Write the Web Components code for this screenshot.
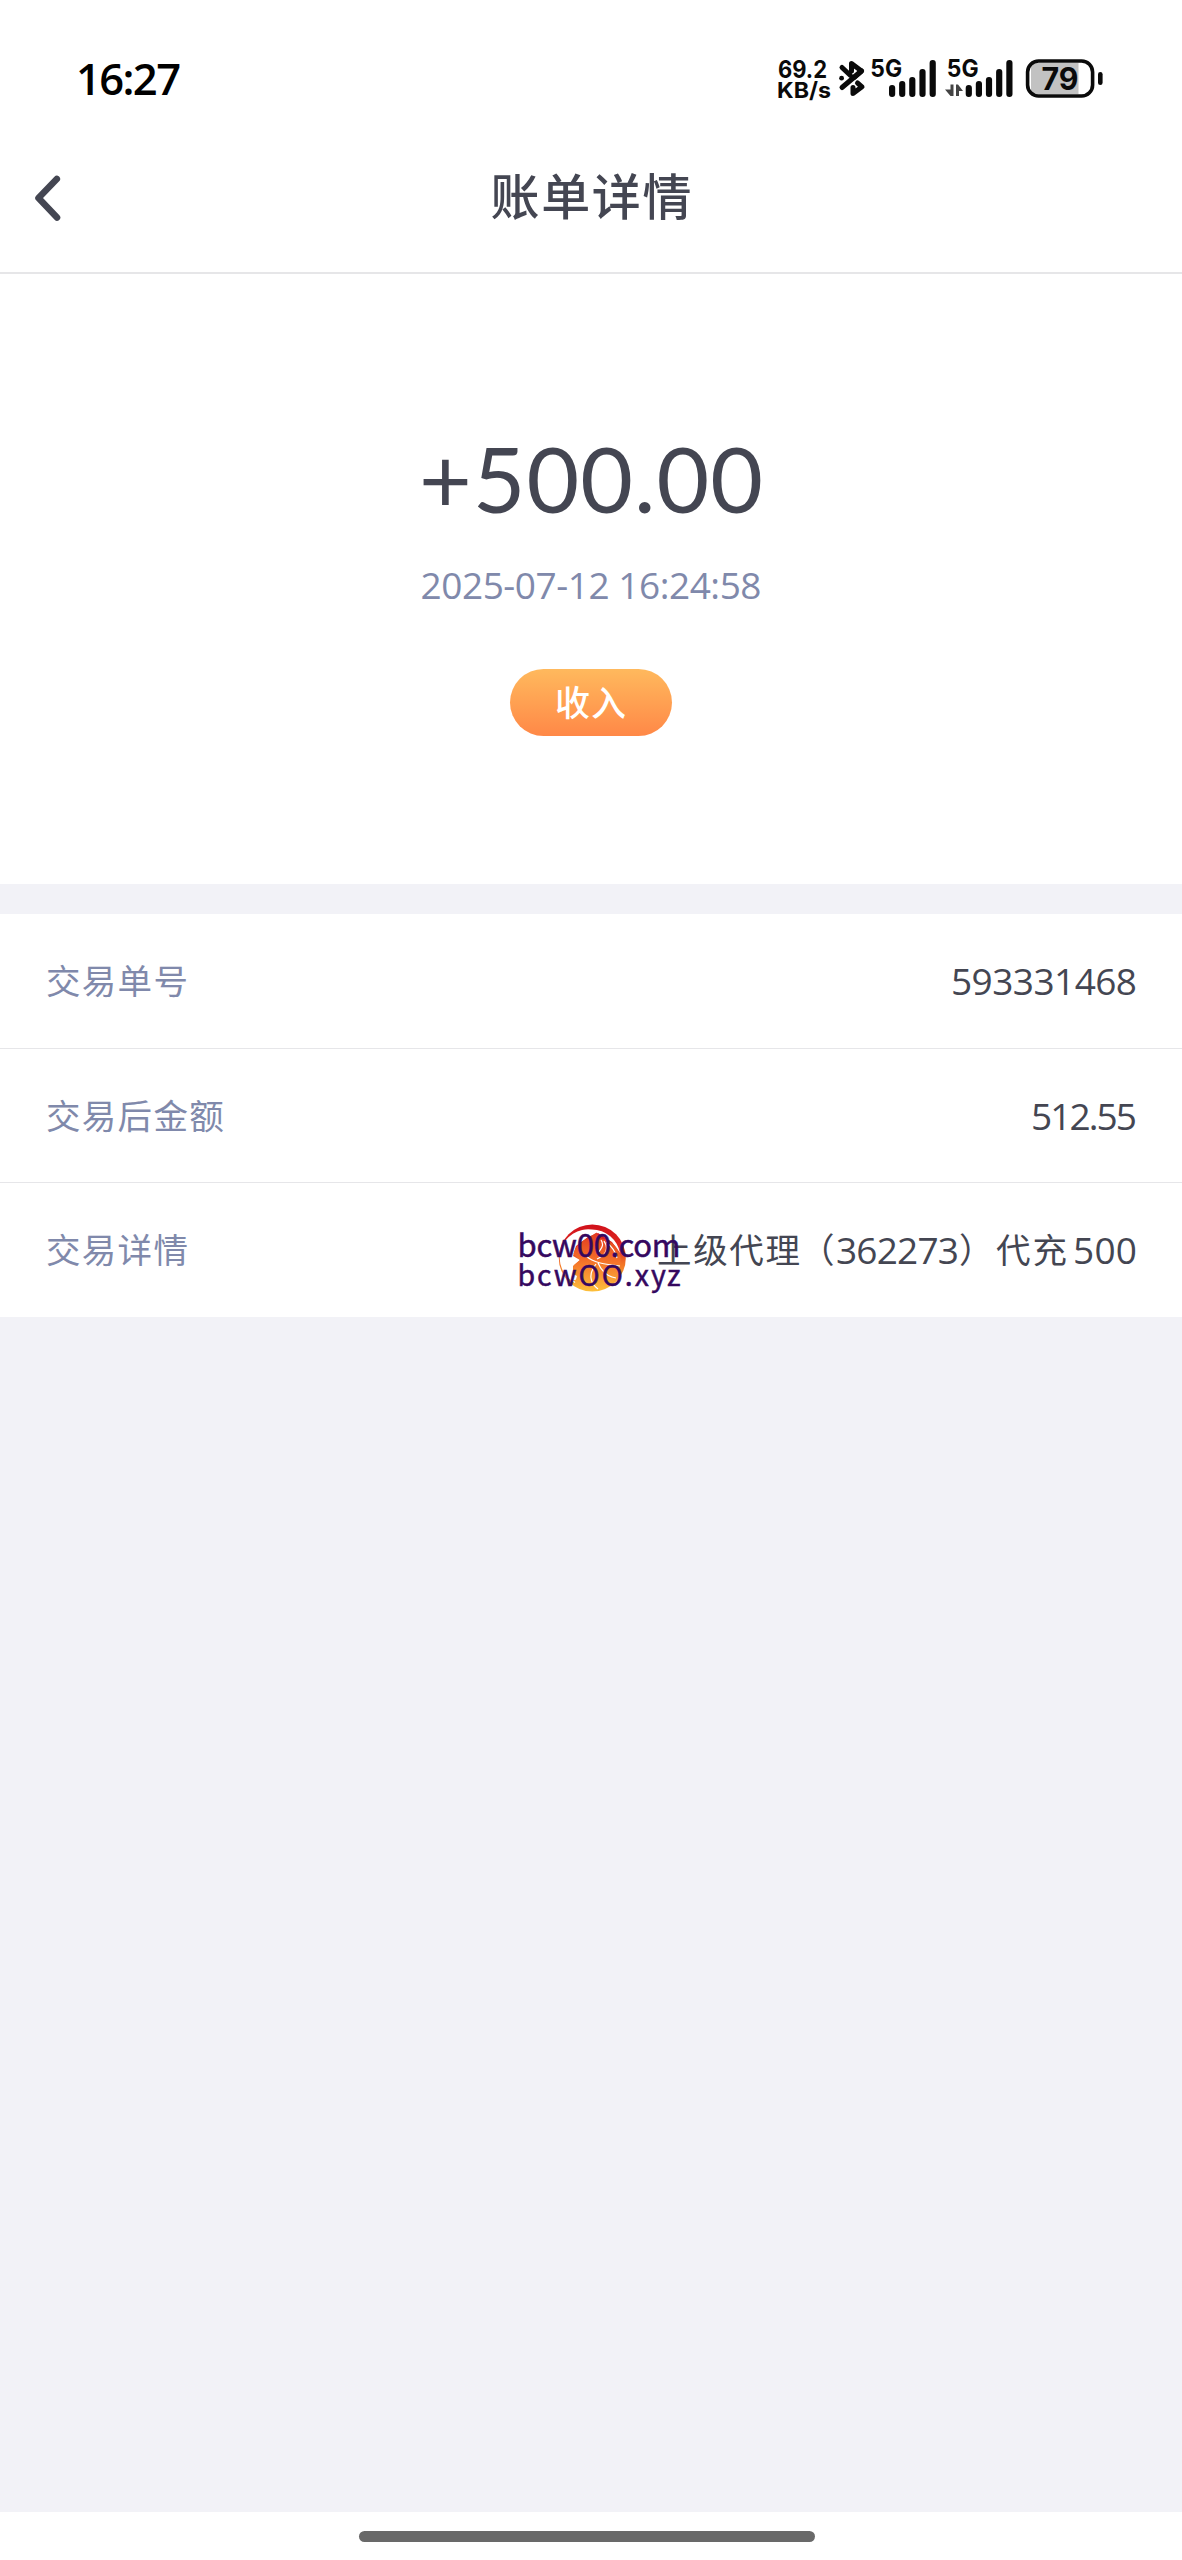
<!DOCTYPE html>
<html lang="zh-CN">
<head>
<meta charset="utf-8">
<title>账单详情</title>
<style>
html,body{margin:0;padding:0;background:#f2f2f7}
body{width:1182px;height:2560px;overflow:hidden;font-family:"Open Sans","Noto Sans CJK SC",sans-serif;color:#444652}
</style>
</head>
<body>
<bill-page></bill-page>
<script>
function define(name, html, setup) {
  const t = document.createElement('template');
  t.innerHTML = html;
  customElements.define(name, class extends HTMLElement {
    constructor() {
      super();
      this.attachShadow({mode: 'open'}).appendChild(t.content.cloneNode(true));
    }
    connectedCallback() { if (setup) setup.call(this, this.shadowRoot); }
  });
}

/* Text tracked so that its advance equals the "w" attribute. */
define('tracked-text', `<style>:host{display:inline-block;white-space:nowrap}span{display:inline-block}</style><span><slot></slot></span>`, function (r) {
  const s = r.querySelector('span');
  const n = [...this.textContent].length;
  if (n < 2) { this.style.width = this.getAttribute('w') + 'px'; return; }
  const ls = (parseFloat(this.getAttribute('w')) - s.getBoundingClientRect().width) / (n - 1);
  s.style.letterSpacing = ls + 'px';
  s.style.marginRight = -ls + 'px';
});

define('status-icons', `<style>:host{display:block;width:350px;height:50px}svg{display:block}text{font-family:Inter,sans-serif;font-weight:700}</style>
<svg width="350" height="50" viewBox="770 54 350 50" fill="#0a0a0a">
<text x="778" y="77.5" font-size="24" textLength="49" lengthAdjust="spacingAndGlyphs">69.2</text>
<text x="777" y="97.7" font-size="22" textLength="54" lengthAdjust="spacingAndGlyphs">KB/s</text>
<g fill="none" stroke="#0a0a0a" stroke-width="5" stroke-linejoin="round" stroke-linecap="round">
<path d="M842 67.5 L850.5 75.5 M851.5 71 V63.5 L861.5 71 L842 87.5"/>
<path d="M861.5 71 L854 77.5"/>
<path d="M853 87.5 V93.5 L862 86.8 L857.5 83"/>
</g>
<circle cx="841.6" cy="78.2" r="2.4"/>
<text x="870.3" y="77.2" font-size="24.500" textLength="31.800" lengthAdjust="spacingAndGlyphs">5G</text>
<g id="b"><rect x="889" y="85" width="6.2" height="12" rx="3"/><rect x="899.1" y="81" width="6.2" height="16" rx="3"/><rect x="909.2" y="77" width="6.2" height="20" rx="3"/><rect x="919.4" y="69" width="6.2" height="28" rx="3"/><rect x="929.6" y="60" width="6.2" height="37" rx="3"/></g>
<text x="946.8" y="77.2" font-size="24.500" textLength="31.800" lengthAdjust="spacingAndGlyphs">5G</text>
<path fill="#444" d="M950.5 84.5h3v11.500h-3l-5.500-6.500h5.500zM956 84.500h2l5 6.500h-4v5h-3z"/>
<use href="#b" x="76.700"/>
<rect x="1031" y="63" width="47.500" height="31" fill="#c2c2c2"/>
<rect x="1027.600" y="61" width="65" height="35" rx="11" fill="none" stroke="#0a0a0a" stroke-width="3.600"/>
<rect x="1098" y="72" width="4.600" height="13" rx="2.300"/>
<text x="1041.500" y="90.300" font-size="31" textLength="37" lengthAdjust="spacingAndGlyphs">79</text>
</svg>`);

define('status-bar', `<style>:host{display:flex;justify-content:space-between;align-items:center;height:158px;box-sizing:border-box;padding:0 62px 0 76px;color:#000}
tracked-text{font-size:43.500px;font-weight:600;line-height:50px}</style>
<tracked-text w="105">16:27</tracked-text><status-icons></status-icons>`);

define('nav-bar', `<style>:host{display:flex;align-items:center;height:116px;box-sizing:border-box;padding:0 30px 37px;border-bottom:2px solid #e6e6e8;color:#444652}
svg,i{flex:none;width:40px;height:50px}h1{flex:1;margin:0 0 5px;text-align:center;font:500 49px/60px "Noto Sans CJK SC",sans-serif;letter-spacing:1.700px;text-indent:1.700px}</style>
<svg viewBox="31 171 40 50" fill="none" stroke="#444652" stroke-width="6.600" stroke-linecap="round" stroke-linejoin="round"><path d="M57.800 178 L39.500 197 L58 216.500"/></svg>
<h1><slot></slot></h1><i></i>`);

define('type-pill', `<style>:host{display:flex;align-items:center;justify-content:center;width:162px;height:67px;border-radius:34px;background:linear-gradient(#ffb95d,#ff8847);color:#fff;font:500 35px/50px "Noto Sans CJK SC",sans-serif;letter-spacing:1px}
span{margin-top:-3px}</style><span><slot></slot></span>`);

define('amount-card', `<style>:host{display:flex;flex-direction:column;align-items:center;height:610px;box-sizing:border-box;padding-top:149px}
.a{font-family:Lato,sans-serif;font-size:91px;line-height:110px;font-weight:400;color:#444652}.d{font-size:37px;line-height:44px;margin-top:30px;color:#8089ab}type-pill{margin-top:62px}</style>
<tracked-text class="a" w="344">+500.00</tracked-text>
<tracked-text class="d" w="341">2025-07-12 16:24:58</tracked-text>
<type-pill>收入</type-pill>`);

define('bill-row', `<style>:host{display:flex;align-items:center;justify-content:space-between;height:134px;box-sizing:border-box;padding:0 45px 0 46px;border-bottom:var(--line,1.500px solid #e6e6e9)}
.l{font:400 34.500px/50px "Noto Sans CJK SC",sans-serif;letter-spacing:1.300px;color:#8089ab;margin-bottom:4px}
.v{display:flex;align-items:center;font-size:37px;line-height:50px;color:#444652}</style>
<div class="l"><slot name="label"></slot></div><div class="v"><slot></slot></div>`);

define('site-mark', `<style>:host{position:absolute;left:510px;top:1216px}svg{display:block}text{font-family:"Noto Sans CJK SC",sans-serif;font-weight:400}</style>
<svg width="180" height="84" viewBox="510 1216 180 84">
<defs><linearGradient id="ring" x1="0" y1="0" x2="0" y2="1"><stop offset="0" stop-color="#d0101b"/><stop offset=".3" stop-color="#df2820"/><stop offset=".6" stop-color="#f27625"/><stop offset="1" stop-color="#fdc03b"/></linearGradient>
<linearGradient id="body" x1="0" y1="0" x2="0" y2="1"><stop offset="0" stop-color="#e23a20"/><stop offset=".5" stop-color="#f47029"/><stop offset="1" stop-color="#fcb73b"/></linearGradient></defs>
<circle cx="592.300" cy="1258" r="33.500" fill="url(#ring)"/>
<path fill="#fff" d="M592 1229.500 A28.500 28.500 0 0 1 620 1253 L612 1242 L598 1233 L588 1237 L576 1246 L573 1256 L580 1260 L573 1266 L573 1274 L577 1276 L575 1283 A28.500 28.500 0 0 1 592 1229.500Z"/>
<path fill="url(#body)" d="M573.500 1254 C575 1246 581 1241 588 1238 L596.500 1232.500 L600 1238.500 C609 1239 617 1245 620.300 1255 C621.500 1266 619 1278 609 1285 C597 1291 582 1289 573 1280 C579 1280 583 1277 582 1271 C577 1273 572 1270 574 1265 L580 1260 Z"/>
<g fill="none" stroke="#fff" stroke-width="1.200"><path d="M601 1240 C605 1246 600 1249 599 1252 M604 1241 C610 1250 604 1256 597 1259 M606 1242 C614 1248 616 1254 617 1258 M586 1256 C594 1263 604 1264 620 1266 M598 1263 C602 1272 609 1277 616 1278 M596 1264 C588 1274 590 1283 598 1289"/></g>
<g fill="#35085f" stroke="#35085f" stroke-width=".5"><text x="517.500" y="1256.500" font-size="31" textLength="163">bcw00.com</text>
<text x="517.500" y="1285.500" font-size="28.500" textLength="163">bcwOO.xyz</text></g>
</svg>`);

define('home-bar', `<style>:host{display:flex;justify-content:center;height:48px;box-sizing:border-box;padding:18.500px 8px 0 0;background:#fff}i{width:456px;height:11.500px;border-radius:6px;background:#696969}</style><i></i>`);

define('bill-page', `<style>:host{display:flex;flex-direction:column;position:relative;width:1182px;height:2560px}
.top{background:#fff}.rows{margin-top:30px;background:#fff}.gap{flex:1}
.rows bill-row:first-child{height:135px}
.rows bill-row:last-child{--line:0 none}.zh{font-size:34.500px}.end{margin-left:6px}</style>
<div class="top"><status-bar></status-bar><nav-bar>账单详情</nav-bar>
<amount-card></amount-card></div>
<div class="rows">
<bill-row><span slot="label">交易单号</span><tracked-text w="186">593331468</tracked-text></bill-row>
<bill-row><span slot="label">交易后金额</span><tracked-text w="106">512.55</tracked-text></bill-row>
<bill-row><span slot="label">交易详情</span><tracked-text class="zh" w="143">上级代理</tracked-text><tracked-text class="zh" w="36">（</tracked-text><tracked-text w="123">362273</tracked-text><tracked-text class="zh" w="37">）</tracked-text><tracked-text class="zh" w="71">代充</tracked-text><tracked-text class="end" w="64">500</tracked-text></bill-row>
</div>
<div class="gap"></div>
<home-bar></home-bar>
<site-mark></site-mark>`);
</script>
</body>
</html>
